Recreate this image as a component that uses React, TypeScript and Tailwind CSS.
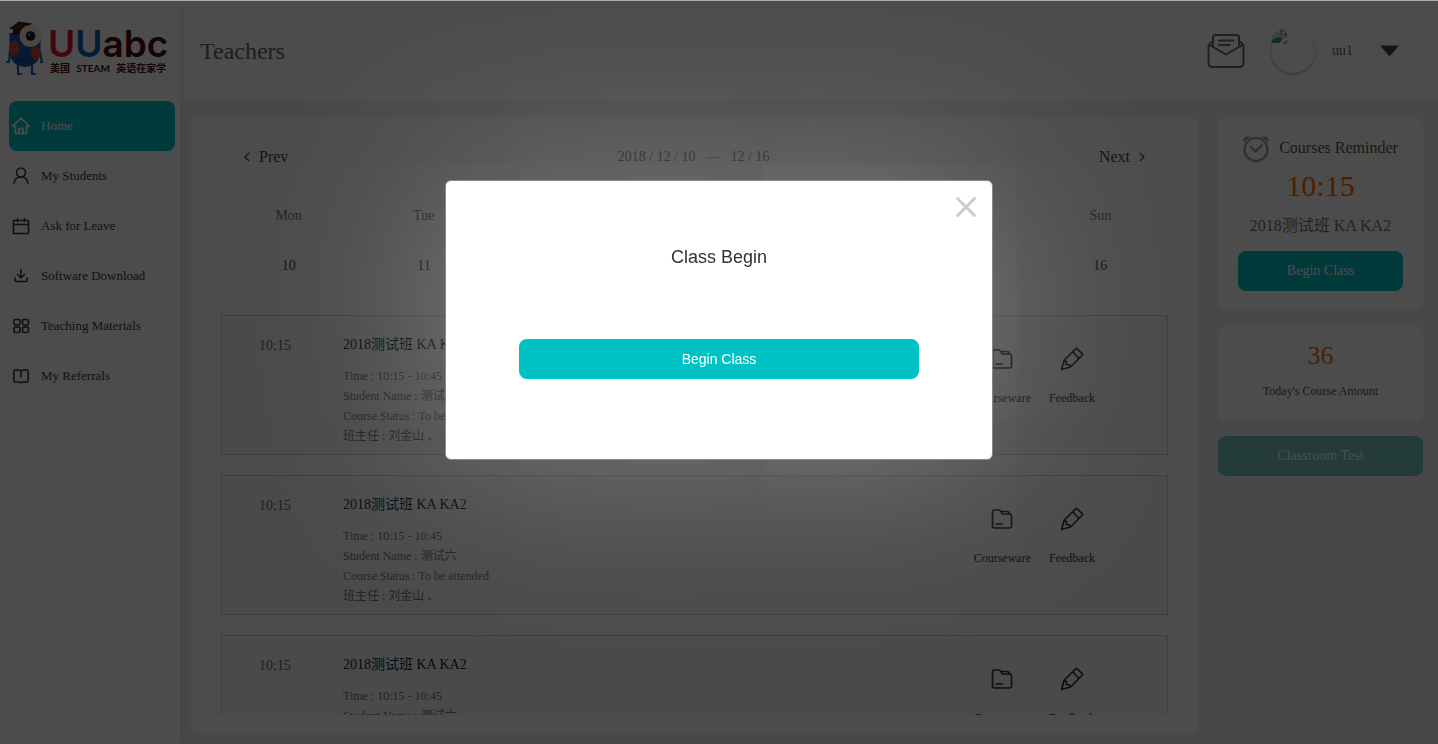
import type { ReactNode } from "react";

const navItems: { label: string; icon: ReactNode }[] = [
  {
    label: "Home",
    icon: (
      <>
        <path d="M1.500 10.500 10 2l8.500 8.500H15.500V17.500H4.500V10.500Z" />
        <path d="M8 17.500v-5h4v5" />
      </>
    ),
  },
  {
    label: "My Students",
    icon: (
      <>
        <circle cx="10" cy="6.500" r="4.500" />
        <path d="M3 17.500C3.500 13.500 6 11 10 11s6.500 2.500 7 6.500" />
      </>
    ),
  },
  {
    label: "Ask for Leave",
    icon: <path d="M2.500 4.500h15v13h-15zM2.500 8.500h15M6.500 2.500v3M13.500 2.500v3" />,
  },
  {
    label: "Software Download",
    icon: <path d="M10 3.500v8M6.500 8.500l3.500 3.500 3.500-3.500M4 12v2q0 1.500 1.500 1.500h9q1.500 0 1.500-1.500v-2" />,
  },
  {
    label: "Teaching Materials",
    icon: (
      <>
        <rect x="3" y="3.500" width="6" height="5.500" rx="1.500" />
        <rect x="11.500" y="3.500" width="6" height="5.500" rx="1.500" />
        <rect x="3" y="11" width="6" height="5.500" rx="1.500" />
        <rect x="11.500" y="11" width="6" height="5.500" rx="1.500" />
      </>
    ),
  },
  {
    label: "My Referrals",
    icon: <path d="M10 5.500Q9 4 7.500 4H4Q2.800 4 2.800 5.200V14.800Q2.800 16 4 16H7.500Q9.500 16 10 17 10.500 16 12.500 16H16Q17.200 16 17.200 14.800V5.200Q17.200 4 16 4H12.500Q11 4 10 5.500V11" />,
  },
];

const days = [
  { name: "Mon", date: 10 },
  { name: "Tue", date: 11 },
  { name: "Wed", date: 12 },
  { name: "Thu", date: 13 },
  { name: "Fri", date: 14 },
  { name: "Sat", date: 15 },
  { name: "Sun", date: 16 },
];

const courses = [1, 2, 3].map((id) => ({
  id,
  time: "10:15",
  title: "2018测试班 KA KA2",
  lines: ["Time : 10:15 - 10:45", "Student Name : 测试六", "Course Status : To be attended", "班主任 : 刘金山 、"],
}));

function Logo() {
  return (
    <div className="flex h-[100px] items-start gap-1 pt-[19px] pl-1">
      <svg className="h-14 w-10 shrink-0" viewBox="0 0 40 56" aria-hidden="true">
        <path d="M5.500 13H36.500V34Q34 46 21 47 8 46 5.500 34Z" fill="#1d55a8" />
        <path d="M6 30 5 42H2M36 32l2 10h-2M14 45v9h4M28 45v9h4" fill="none" stroke="#2a66b8" strokeWidth="2.200" />
        <ellipse cx="10" cy="28" rx="5" ry="7.500" fill="#d8453f" />
        <ellipse cx="31.500" cy="33" rx="4.500" ry="6.500" fill="#d8453f" />
        <path d="M13 38q8 5 15-1" fill="none" stroke="#123a80" strokeWidth="1.500" />
        <path d="M9 9v5q5 2 13-3V6Z" fill="#451515" />
        <path d="m5 8.500 10-7 13 2-9 8Z" fill="#5c2020" />
        <circle cx="26.500" cy="16" r="11" fill="#f3ead2" />
        <circle cx="26.500" cy="16" r="4.800" fill="#1c1230" />
        <circle cx="25" cy="14.500" r="1.200" fill="#8a88a0" />
      </svg>
      <div className="flex flex-col pt-2">
        <div className="font-['Inter',sans-serif] text-[37px]/8 font-semibold text-[#4a0c10]">
          <span className="text-[#e01428]">U</span>
          <span className="text-[#1560b4]">U</span>abc
        </div>
        <div className="flex justify-between px-0.5 font-['Lato','Noto_Sans_CJK_SC',sans-serif] text-[10px]/4 font-bold text-[#4a0c10]">
          <span>美国</span>
          <span>STEAM</span>
          <span>英语在家学</span>
        </div>
      </div>
    </div>
  );
}

function Sidebar() {
  return (
    <aside className="relative z-10 w-[180px] shrink-0 bg-white shadow-[4px_0_8px_rgba(0,120,110,0.08)]">
      <Logo />
      <nav className="flex flex-col pr-[5px] pl-[9px]">
        {navItems.map((item, i) => (
          <a
            key={item.label}
            href="#"
            className={
              i === 0
                ? "flex h-[50px] items-center gap-2.5 rounded-lg bg-[#00c1c4] pl-0.5 text-[13px] text-white"
                : "flex h-[50px] items-center gap-2.5 pl-0.5 text-[13px] text-[#3a3a3a]"
            }
          >
            <svg className="size-5" viewBox="0 0 20 20" fill="none" stroke="currentColor" strokeWidth="1.600" strokeLinejoin="round" strokeLinecap="round" aria-hidden="true">
              {item.icon}
            </svg>
            {item.label}
          </a>
        ))}
      </nav>
    </aside>
  );
}

function Header() {
  return (
    <header className="flex h-[100px] shrink-0 items-center bg-white pr-[39px] pl-5">
      <h1 className="text-2xl text-[#666]">Teachers</h1>
      <button aria-label="Messages" className="mr-[26px] ml-auto">
        <svg className="h-9 w-[38px]" viewBox="0 0 38 36" fill="none" stroke="#6a6a6a" strokeWidth="2" strokeLinejoin="round" strokeLinecap="round" aria-hidden="true">
          <path d="M6 8.500Q1.500 10.500 1.500 14V30q0 4 4 4h27q4 0 4-4V14Q36.500 10.500 32 8.500" />
          <path d="M6 14V4.500q0-2.500 2.500-2.500h21q2.500 0 2.500 2.500V14M2.500 12 19 21.500 35.500 12" />
          <path d="M12 7.500h14.500M12 12h10.500" />
        </svg>
      </button>
      <div className="size-11 rounded-full bg-white shadow-[0_1px_3px_rgba(0,0,0,0.35)]">
        <svg className="size-4" viewBox="0 0 16 16" aria-label="uu1" role="img">
          <path d="M0 14V9Q3 3 10 1v4h5v3l-7 6Z" fill="#c2d2f0" />
          <path d="M0 14q3-6 8-6 3 0 3 3l-3 3Z" fill="#3fa037" />
          <path d="M10 5V1h2l3.500 4v3M15.500 11v3H12M10 5h5.500" fill="none" stroke="#777" />
        </svg>
      </div>
      <span className="ml-[17px] text-sm text-[#666]">uu1</span>
      <button aria-label="Account menu" className="ml-[27px]">
        <svg className="h-3 w-[19px]" viewBox="0 0 19 12" aria-hidden="true">
          <path d="M0 .5h19L9.500 11.500Z" fill="#444" />
        </svg>
      </button>
    </header>
  );
}

function CourseRow({ course }: { course: (typeof courses)[number] }) {
  return (
    <li className="flex h-[140px] shrink-0 border border-[#d0d0d0] bg-[#f8f8f8] pr-[72px] pl-[37px]">
      <time className="w-[84px] pt-5 text-sm text-[#666]">{course.time}</time>
      <div className="pt-[19px]">
        <h2 className="mb-[11px] text-sm text-[#222]">{course.title}</h2>
        {course.lines.map((line) => (
          <p key={line} className="text-xs/5 text-[#777]">
            {line}
          </p>
        ))}
      </div>
      <div className="ml-auto flex gap-[18px] pt-[31px] text-xs text-[#333]">
        <a href="#" className="flex flex-col items-center gap-[19px]">
          <svg className="size-6" viewBox="0 0 24 24" fill="none" stroke="currentColor" strokeWidth="1.600" strokeLinejoin="round" strokeLinecap="round" aria-hidden="true">
            <path d="M2.500 5Q2.500 3 4.500 3H9q1 0 2 1.500 .5 2.500 2.500 2.500H19.500q2 0 2 2V19q0 2-2 2h-15q-2 0-2-2ZM11 4.500h6q2.500 0 2.500 2.500M6 17h6.500" />
          </svg>
          Courseware
        </a>
        <a href="#" className="flex flex-col items-center gap-[19px]">
          <svg className="size-6" viewBox="0 0 24 24" fill="none" stroke="currentColor" strokeWidth="1.700" strokeLinejoin="round" strokeLinecap="round" aria-hidden="true">
            <path d="M1.500 22.500 4 13.500 15.500 2q1-1 2 0l4.500 4.500q1 1 0 2L10.500 20ZM13 5l6 6.500M4 13.500l2.500 1-.5 3 3.500.5 1 2" />
          </svg>
          Feedback
        </a>
      </div>
    </li>
  );
}

function Schedule() {
  return (
    <section className="flex min-w-0 flex-1 flex-col rounded-lg bg-white px-[30px] pt-7 pb-[19px]">
      <div className="flex items-center justify-between px-5 text-base text-[#444]">
        <button className="flex items-center gap-1">
          <Chevron d="M8 3 4 7l4 4" />
          Prev
        </button>
        <span className="text-sm whitespace-pre text-[#777]">2018 / 12 / 10   —   12 / 16</span>
        <button className="flex items-center gap-1">
          Next
          <Chevron d="m6 3 4 4-4 4" />
        </button>
      </div>
      <div className="mt-[29px] mb-[17px] grid grid-cols-7 text-center text-sm">
        {days.map((day) => (
          <div key={day.name} className="flex flex-col">
            <span className="h-[50px] leading-[36px] text-[#777]">{day.name}</span>
            <span className="h-[50px] leading-[36px] text-[#444]">{day.date}</span>
          </div>
        ))}
      </div>
      <ul className="flex min-h-0 flex-1 flex-col gap-5 overflow-hidden">
        {courses.map((course) => (
          <CourseRow key={course.id} course={course} />
        ))}
      </ul>
    </section>
  );
}

function Chevron({ d }: { d: string }) {
  return (
    <svg className="size-3.5" viewBox="0 0 14 14" fill="none" stroke="currentColor" strokeWidth="1.300" aria-hidden="true">
      <path d={d} />
    </svg>
  );
}

function Reminder() {
  return (
    <div className="flex w-[205px] shrink-0 flex-col">
      <section className="flex h-[193px] flex-col items-center rounded-lg bg-white px-5 pt-[17px] text-center">
        <div className="flex items-center gap-2 text-base text-[#555]">
          <svg className="size-7" viewBox="0 0 28 28" fill="none" stroke="#999" strokeWidth="2" aria-hidden="true">
            <circle cx="13" cy="15.500" r="11.500" />
            <path d="m7.500 12.500 5 5 7-7" />
            <path d="M1.500 6.500Q1 3.500 5 3.500ZM24.500 6.500Q25 3.500 21 3.500Z" fill="#999" />
          </svg>
          Courses Reminder
        </div>
        <p className="mt-1 text-3xl/10 text-[#ff6a00]">10:15</p>
        <p className="mt-2 text-base text-[#777]">2018测试班 KA KA2</p>
        <button className="mt-[13px] h-10 w-full rounded-lg bg-[#00c1c4] text-sm text-white">Begin Class</button>
      </section>
      <section className="mt-4 flex h-[95px] flex-col items-center rounded-lg bg-white pt-3">
        <p className="text-[26px]/9 text-[#ff6a00]">36</p>
        <p className="mt-[7px] text-xs/5 text-[#555]">Today's Course Amount</p>
      </section>
      <button className="mt-[15px] h-10 rounded-lg bg-[#76c8c4] text-sm text-white">Classroom Test</button>
    </div>
  );
}

function ClassDialog() {
  return (
    <div className="fixed inset-0 z-20 flex items-start justify-center border-t border-[#a9adad] bg-black/70 pt-[179px]">
      <div
        role="dialog"
        aria-modal="true"
        aria-labelledby="dialog-title"
        className="relative flex h-[280px] w-[548px] flex-col items-center rounded-md border border-[#888] bg-white pt-[62px] font-['Liberation_Sans',Arial,sans-serif] shadow-[0_0_180px_rgba(255,255,255,0.3)]"
      >
        <button aria-label="Close" className="absolute top-3.5 right-3.5 size-6">
          <svg viewBox="0 0 24 24" fill="none" stroke="#ccc" strokeWidth="3" strokeLinecap="round" aria-hidden="true">
            <path d="m3.500 3.500 17 17M20.500 3.500l-17 17" />
          </svg>
        </button>
        <h2 id="dialog-title" className="text-lg text-[#333]">
          Class Begin
        </h2>
        <button className="mt-[68px] h-10 w-[400px] rounded-lg bg-[#00c1c4] text-sm text-white">Begin Class</button>
      </div>
    </div>
  );
}

export default function App() {
  return (
    <div className="flex h-screen bg-[#f2f2f2] pt-px font-['Liberation_Serif','Noto_Sans_CJK_SC',serif]">
      <Sidebar />
      <div className="flex min-w-0 flex-1 flex-col">
        <Header />
        <main className="flex min-h-0 flex-1 items-start gap-5 pt-4 pr-[15px] pb-2.5 pl-[11px]">
          <div className="flex h-full min-w-0 flex-1">
            <Schedule />
          </div>
          <Reminder />
        </main>
      </div>
      <ClassDialog />
    </div>
  );
}
